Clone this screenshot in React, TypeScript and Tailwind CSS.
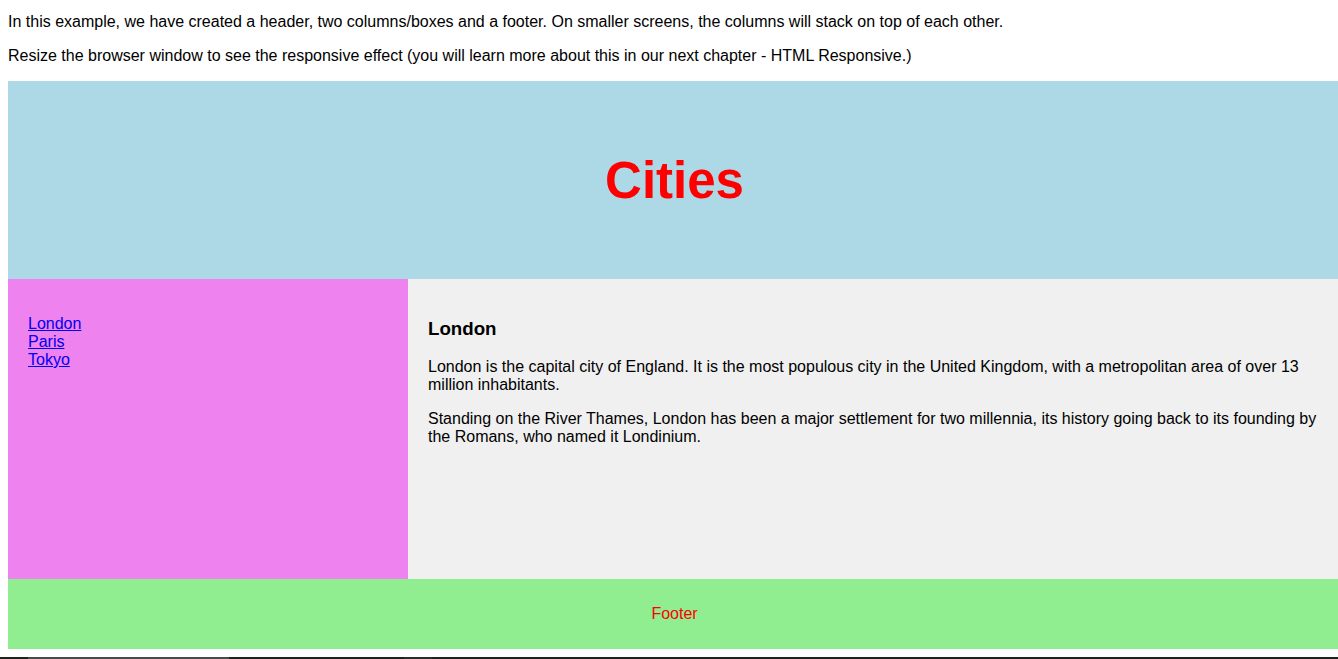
import React from 'react';

const cities = ['London', 'Paris', 'Tokyo'];

export default function App() {
  return (
    <div className="w-screen h-[659px] overflow-hidden bg-white text-black text-[16px] leading-[normal] font-['Liberation_Sans',Arial,sans-serif]">
      <div className="pl-2 pt-[13px]">
        <p className="mb-4">
          In this example, we have created a header, two columns/boxes and a footer. On smaller screens, the columns will stack on top of each other.
        </p>
        <p className="mb-4">
          Resize the browser window to see the responsive effect (you will learn more about this in our next chapter - HTML Responsive.)
        </p>

        <div className="w-[1333px]">
          {/* header */}
          <header className="h-[198px] bg-[#add8e6] flex items-center justify-center pt-[1px]">
            <h1 className="text-[51px] font-bold text-[#ff0000] leading-[normal]">Cities</h1>
          </header>

          {/* two columns */}
          <section className="flex h-[300px]">
            <nav className="w-[400px] bg-[#ee82ee] p-5">
              <ul className="mt-4">
                {cities.map(c => (
                  <li key={c}>
                    <a href="#" className="text-[#0000ee] underline">{c}</a>
                  </li>
                ))}
              </ul>
            </nav>
            <article className="flex-1 bg-[#f0f0f0] p-5">
              <h3 className="text-[18.72px] font-bold mt-[18.72px] mb-[18.72px]">London</h3>
              <p className="mb-4">
                London is the capital city of England. It is the most populous city in the United Kingdom, with a metropolitan area of over 13 million inhabitants.
              </p>
              <p>
                Standing on the River Thames, London has been a major settlement for two millennia, its history going back to its founding by the Romans, who named it Londinium.
              </p>
            </article>
          </section>

          {/* footer */}
          <footer className="bg-[#90ee90] p-[10px] text-center">
            <p className="my-4 text-[#ff0000]">Footer</p>
          </footer>
        </div>
      </div>

      {/* bottom strip */}
      <div className="mt-2 h-[2px] bg-[#1f211f] flex">
        <div className="ml-[28px] w-[201px] bg-[#4a4a4a]" />
        <div className="ml-[175px] w-[28px] bg-[#2a2c2a]" />
      </div>
    </div>
  );
}
